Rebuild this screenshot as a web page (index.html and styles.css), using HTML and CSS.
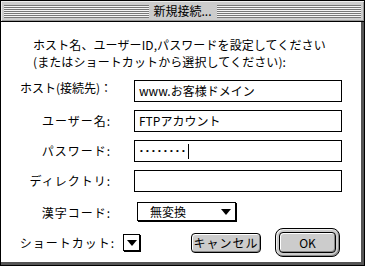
FILE: index.html
```html
<!DOCTYPE html>
<html lang="ja">
<head>
    <meta charset="UTF-8">
    <meta name="viewport" content="width=device-width, initial-scale=1.0">
    <title>新規接続...</title>
    <link rel="stylesheet" href="styles.css">
</head>
<body>
    <div class="window">
        <div class="titlebar">
            <span class="stripes"></span>
            <span class="title">新規接続...</span>
            <span class="stripes"></span>
        </div>

        <div class="content">
            <p class="intro">ホスト名、ユーザーID,パスワードを設定してください<br>(またはショートカットから選択してください):</p>

            <div class="form">
                <label class="host-label">ホスト(接続先)：</label>
                <div class="field">www.お客様ドメイン</div>

                <label>ユーザー名:</label>
                <div class="field">FTPアカウント</div>

                <label>パスワード:</label>
                <div class="field"><span class="dots">••••••••</span><span class="caret"></span></div>

                <label>ディレクトリ:</label>
                <div class="field"></div>

                <label class="code-label">漢字コード:</label>
                <div class="popup">無変換<span class="arrow"></span></div>
            </div>

            <div class="footer">
                <label>ショートカット:</label>
                <div class="mini-popup"><span class="arrow"></span></div>
                <button class="btn cancel">キャンセル</button>
                <div class="default-ring">
                    <button class="btn ok">OK</button>
                </div>
            </div>
        </div>
    </div>
</body>
</html>
```

FILE: styles.css
```css
body {
    margin: 0;
    font-family: "Noto Sans CJK JP", sans-serif;
    font-size: 12px;
    color: #000;
    background-color: #fff;
}
.window {
    width: 365px;
    height: 266px;
    box-sizing: border-box;
    border: 1px solid #000;
    display: flex;
    flex-direction: column;
    background-color: #fff;
}
.titlebar {
    height: 20px;
    flex-shrink: 0;
    border-bottom: 1px solid #000;
    background-color: #ccc;
    box-shadow: inset 1px 1px 0 #eee, inset -1px -1px 0 #999;
    display: flex;
    align-items: center;
    padding: 0 3px;
}
.stripes {
    flex: 1;
    height: 13px;
    background: repeating-linear-gradient(to bottom, #777 0 1px, #f4f4f4 1px 2px);
}
.title {
    padding: 0 5px;
    line-height: 20px;
}
.content {
    flex: 1;
    border-right: 3px solid #555;
    border-bottom: 3px solid #555;
    display: flex;
    flex-direction: column;
}
.intro {
    margin: 14px 0 0 32px;
    line-height: 17px;
    letter-spacing: 0.1px;
}
.form {
    display: grid;
    grid-template-columns: 113px 208px;
    grid-auto-rows: 22px;
    column-gap: 20px;
    row-gap: 8px;
    margin-top: 10px;
}
label {
    text-align: right;
    align-self: center;
    line-height: 14px;
    padding-right: 3px;
    white-space: nowrap;
    letter-spacing: 1px;
}
.host-label {
    padding-right: 2px;
    margin-top: -6px;
    letter-spacing: 0;
}
.field {
    border: 1px solid #000;
    padding: 0 4px;
    line-height: 20px;
    display: flex;
    align-items: center;
    white-space: nowrap;
}
.dots {
    font-family: "Liberation Mono", monospace;
    font-size: 8px;
    letter-spacing: 1.2px;
}
.caret {
    width: 1px;
    height: 15px;
    background-color: #000;
    margin-left: 1px;
}
.code-label {
    margin-top: 4px;
}
.popup {
    align-self: end;
    width: 99px;
    height: 19px;
    box-sizing: border-box;
    margin-left: 3px;
    margin-bottom: 1px;
    border: 1px solid #000;
    box-shadow: 1px 1px 0 #000;
    padding: 0 4px 0 12px;
    line-height: 17px;
    display: flex;
    align-items: center;
    justify-content: space-between;
}
.arrow {
    width: 0;
    height: 0;
    border-left: 5px solid transparent;
    border-right: 5px solid transparent;
    border-top: 6px solid #000;
}
.footer {
    display: flex;
    align-items: center;
    height: 29px;
    margin-top: 6px;
    padding-right: 21px;
}
.footer label {
    width: 114px;
    box-sizing: border-box;
    padding-right: 0;
}
.mini-popup {
    width: 15px;
    height: 15px;
    margin-left: 8px;
    border: 1px solid #000;
    box-shadow: 1px 1px 0 #000;
    display: flex;
    align-items: center;
    justify-content: center;
}
.btn {
    font-family: "Noto Sans CJK JP", sans-serif;
    font-size: 12px;
    color: #000;
    background-color: #ccc;
    border: 1px solid #000;
    border-radius: 4px;
    box-shadow: inset 1px 1px 0 #fff, inset -1px -1px 0 #888;
    padding: 0;
    line-height: 16px;
}
.cancel {
    margin-left: auto;
    width: 70px;
    height: 20px;
    letter-spacing: 1px;
}
.default-ring {
    margin-left: 14px;
    width: 65px;
    height: 29px;
    box-sizing: border-box;
    border: 1px solid #000;
    border-radius: 8px;
    padding: 3px;
    background-color: #ccc;
    box-shadow: inset 1px 1px 0 #eee, inset -1px -1px 0 #888;
}
.ok {
    width: 100%;
    height: 100%;
    display: block;
}
```
